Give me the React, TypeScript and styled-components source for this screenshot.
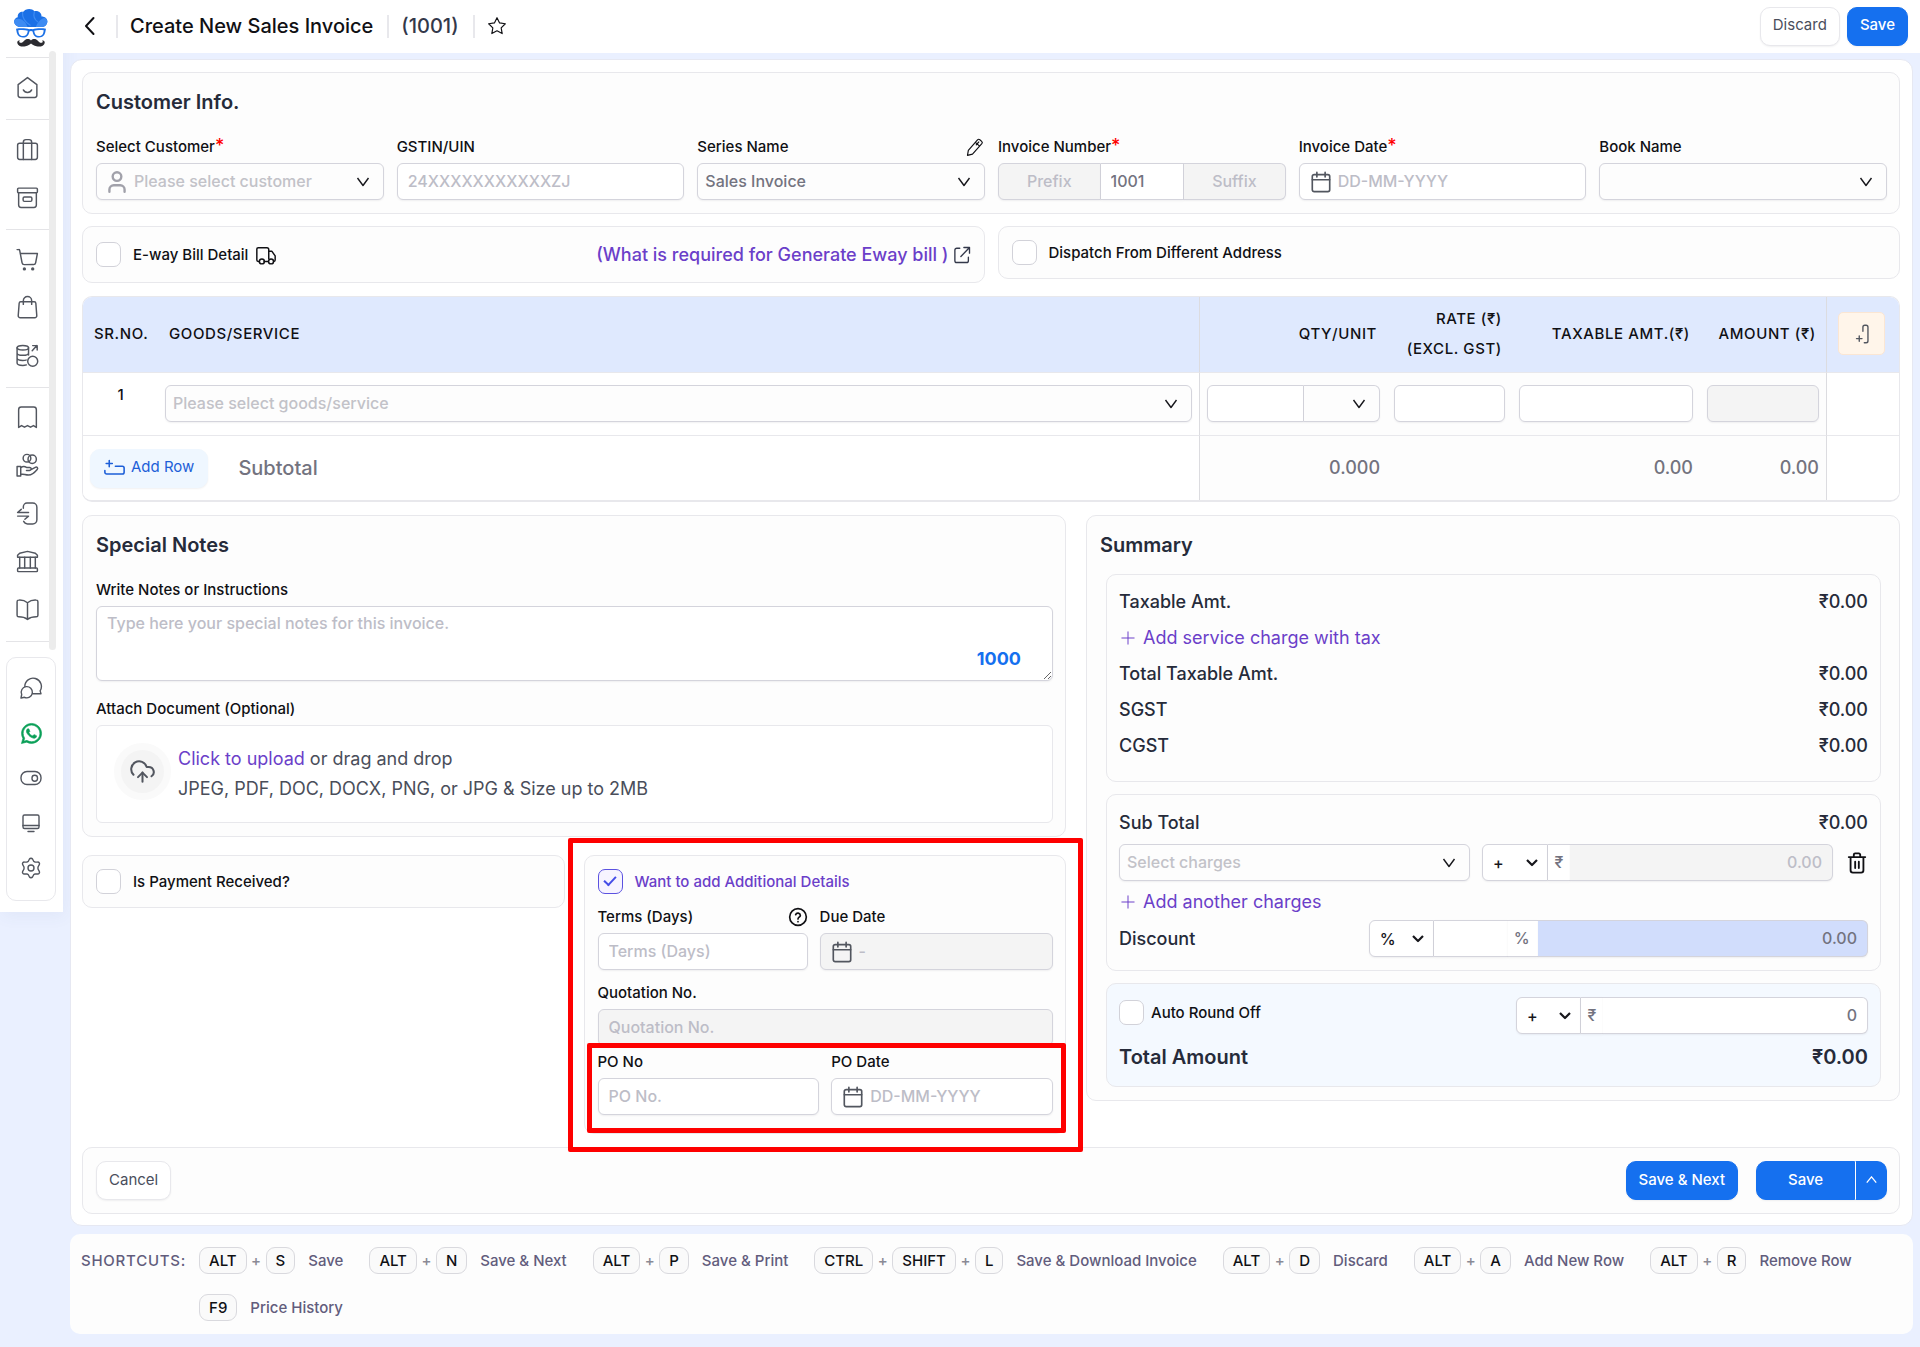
import React, { useId, useState } from 'react';
import styled, { createGlobalStyle, css } from 'styled-components';
import { FaWhatsapp } from 'react-icons/fa';
import { User, CloudUpload } from 'lucide-react';

const color = {
  page: '#eaf0ff',
  card: '#fdfdfd',
  line: '#e8e8ec',
  field: '#d4d4dc',
  muted: '#73737f',
  faint: '#bdbdc7',
  ink: '#262b3a',
  purple: '#6b3fc9',
  blue: '#1570ef',
};

const GlobalStyle = createGlobalStyle`
  *, *::before, *::after { box-sizing: border-box; }
  body {
    margin: 0;
    background: ${color.page};
    color: #101014;
    font-family: Inter, "Noto Sans", "Liberation Sans", sans-serif;
    font-size: 15px;
    font-weight: 500;
    line-height: 20px;
  }
  button, input, select, textarea { font: inherit; margin: 0; }
  button { cursor: pointer; }
`;

/* ---------- shell ---------- */

const Shell = styled.div`
  display: grid;
  grid-template-columns: 63px minmax(0, 1fr);
  align-items: start;
`;

const Sidebar = styled.aside`
  background: #fff;
  padding: 8px 7px 11px 6px;
  box-shadow: 2px 4px 16px rgba(60, 80, 140, 0.06);
`;

const LogoLink = styled.a`
  display: flex;
  justify-content: center;
  height: 43px;
`;

const NavScroll = styled.nav`
  display: grid;
  grid-template-columns: 1fr 7px;
`;

const NavGroups = styled.div`
  padding: 6px 0 8px;
`;

const ScrollThumb = styled.span`
  background: #ececec;
  border-radius: 4px;
`;

const NavGroup = styled.ul`
  list-style: none;
  margin: 0;
  padding: 5px 0 8px;
  border-top: 1px solid #e4e4e7;
  &:last-child { padding: 0; }
`;

const NavLink = styled.a<{ $green?: boolean }>`
  display: flex;
  align-items: center;
  justify-content: center;
  height: 48px;
  color: ${p => (p.$green ? '#0a9f57' : '#52565f')};
`;

const ToolList = styled.ul`
  list-style: none;
  display: grid;
  grid-auto-rows: 1fr;
  height: 244px;
  margin: 7px 0 0;
  padding: 8px 0 10px;
  border: 1px solid ${color.line};
  border-radius: 10px;
  li { display: grid; }
  ${NavLink} { height: auto; }
`;

const Page = styled.div`
  min-width: 0;
`;

const TopBar = styled.header`
  display: flex;
  align-items: center;
  justify-content: space-between;
  height: 53px;
  padding: 0 12px 1px 15px;
  background: #fff;
`;

const TopGroup = styled.div`
  display: flex;
  align-items: center;
`;

const TopActions = styled(TopGroup)`
  gap: 7px;
`;

const Crumb = styled.div`
  display: flex;
  align-items: center;
  height: 23px;
  padding: 0 14px 0 12px;
  border-left: 2px solid ${color.line};
`;

const PageTitle = styled.h1`
  margin: 0;
  font-size: 20px;
  line-height: 24px;
  font-weight: 500;
`;

const InvoiceNo = styled.span`
  font-size: 20px;
  line-height: 24px;
  color: #33384a;
`;

const IconButton = styled.button`
  display: inline-flex;
  align-items: center;
  justify-content: center;
  padding: 0;
  border: 0;
  background: none;
  color: inherit;
`;

const BackButton = styled(IconButton)`
  width: 24px;
  height: 24px;
  margin-right: 14px;
`;

const Button = styled.button<{ $primary?: boolean }>`
  height: 39px;
  padding: 0 12px 2px;
  border: 1px solid ${p => (p.$primary ? color.blue : color.line)};
  border-radius: 10px;
  background: ${p => (p.$primary ? color.blue : '#fff')};
  color: ${p => (p.$primary ? '#fff' : '#4a4e5c')};
  font-size: 15px;
  font-weight: ${p => (p.$primary ? 500 : 400)};
  box-shadow: 0 1px 2px rgba(16, 24, 40, 0.06);
`;

const SplitButton = styled.div`
  display: flex;
  ${Button}:first-child {
    width: 99px;
    border-radius: 10px 0 0 10px;
  }
  ${Button}:last-child {
    width: 32px;
    padding: 0;
    border-left-color: #fff;
    border-radius: 0 10px 10px 0;
  }
`;

const Content = styled.main`
  display: grid;
  gap: 8px;
  padding: 6px 7px 13px;
`;

const Panel = styled.form`
  display: grid;
  gap: 13px;
  padding: 12px 12px 11px 11px;
  background: #fff;
  border: 1px solid #e6e8f2;
  border-radius: 12px;
`;

const Card = styled.section`
  min-width: 0;
  padding: 13px 12px 13px 13px;
  background: ${color.card};
  border: 1px solid ${color.line};
  border-radius: 10px;
`;

const CardTitle = styled.h2`
  margin: 0 0 19px;
  font-size: 20px;
  line-height: 32px;
  font-weight: 600;
  color: ${color.ink};
`;

/* ---------- fields ---------- */

const FieldBox = styled.div`
  display: grid;
  gap: 6px;
  min-width: 0;
`;

const LabelRow = styled.div`
  display: flex;
  align-items: center;
  justify-content: space-between;
  height: 20px;
`;

const Required = styled.span`
  color: #f00;
  font-size: 18px;
  line-height: 16px;
`;

const frame = css`
  height: 37px;
  border: 1px solid ${color.field};
  border-radius: 6px;
  box-shadow: 0 1px 2px rgba(16, 24, 40, 0.06);
`;

const Input = styled.input<{ $right?: boolean }>`
  ${frame}
  width: 100%;
  min-width: 0;
  padding: 0 10px 2px;
  background: #fff;
  color: ${color.muted};
  font-size: 16px;
  outline: none;
  text-align: ${p => (p.$right ? 'right' : 'left')};
  &::placeholder { color: ${color.faint}; opacity: 1; }
  &:disabled { background: #f4f4f4; }
`;

const WithIcon = styled.div<{ $disabled?: boolean }>`
  ${frame}
  display: flex;
  align-items: center;
  gap: 6px;
  padding: 0 10px;
  background: ${p => (p.$disabled ? '#f4f4f4' : '#fff')};
  color: #52565f;
  svg { flex: none; }
  ${Input} { height: 35px; padding: 0 0 2px; border: 0; box-shadow: none; background: none; }
`;

const SelectBox = styled.div<{ $empty?: boolean; $icon?: boolean }>`
  ${frame}
  display: grid;
  align-items: center;
  min-width: 0;
  background: ${color.card};
  > * { grid-area: 1 / 1; }
  select {
    appearance: none;
    width: 100%;
    min-width: 0;
    height: 35px;
    padding: 0 30px 2px ${p => (p.$icon ? 37 : 7)}px;
    border: 0;
    border-radius: 6px;
    outline: none;
    background: none;
    font-size: 16px;
    color: ${p => (p.$empty ? '#c2c2c8' : color.muted)};
  }
  > svg { pointer-events: none; }
  > svg:last-child { justify-self: end; margin-right: 12px; }
  > svg:first-child { margin-left: 7px; color: #a1a1aa; }
`;

const CompactSelect = styled(SelectBox)`
  background: #fff;
  select { padding: 0 26px 0 10px; color: #17171c; }
  > svg:last-child { margin-right: 7px; }
`;

const Joined = styled.div<{ $columns: string }>`
  display: grid;
  grid-template-columns: ${p => p.$columns};
  > :not(:first-child) { border-top-left-radius: 0; border-bottom-left-radius: 0; border-left-width: 0; }
  > :not(:last-child) { border-top-right-radius: 0; border-bottom-right-radius: 0; }
`;

const NumberParts = styled(Joined)`
  ${Input}:disabled { text-align: center; }
`;

const Addon = styled.span<{ $end?: boolean }>`
  ${frame}
  display: flex;
  align-items: center;
  justify-content: ${p => (p.$end ? 'flex-end' : 'center')};
  padding: 0 ${p => (p.$end ? 8 : 0)}px 2px 0;
  background: #fff;
  && { border-right-width: 0; }
  color: ${color.muted};
  font-size: 16px;
`;

const BareInput = styled(Input)`
  border-right-width: 0;
`;

const DiscountAmount = styled(Input)`
  background: #d1ddfc;
`;

const CheckLabel = styled.label<{ $active?: boolean; $tight?: boolean }>`
  display: inline-flex;
  align-items: center;
  gap: ${p => (p.$tight ? 7 : 12)}px;
  color: ${p => (p.$active ? color.purple : 'inherit')};
`;

const Checkbox = styled.input`
  appearance: none;
  display: grid;
  place-items: center;
  width: 25px;
  height: 25px;
  border: 1px solid #d2d2d9;
  border-radius: 7px;
  background: #fff;
  &::after {
    content: '';
    width: 12px;
    height: 7px;
    border: solid transparent;
    border-width: 0 0 2px 2px;
    transform: translateY(-2px) rotate(-47deg);
  }
  &:checked { border-color: #5b52e0; background: #f7f4ff; }
  &:checked::after { border-color: #444ce7; }
`;

/* ---------- sections ---------- */

const SixColumns = styled.div`
  display: grid;
  grid-template-columns: repeat(6, minmax(0, 1fr));
  gap: 13px;
`;

const HalfRow = styled.div`
  display: grid;
  grid-template-columns: repeat(2, minmax(0, 1fr));
  align-items: start;
  gap: 13px;
  margin-top: -1px;
`;

const OptionCard = styled(Card)<{ $tall?: boolean }>`
  display: flex;
  align-items: center;
  justify-content: space-between;
  height: ${p => (p.$tall ? 57 : 53)}px;
  padding: 0 13px;
`;

const InlineLabel = styled.span`
  display: inline-flex;
  align-items: center;
  gap: 7px;
`;

const HelpLink = styled.a`
  display: inline-flex;
  align-items: center;
  gap: 4px;
  color: ${color.purple};
  font-size: 18px;
  line-height: 24px;
  text-decoration: none;
  svg { color: #33384a; }
`;

const TableFrame = styled.div`
  border: 1px solid ${color.line};
  border-bottom-width: 2px;
  border-radius: 10px;
  overflow: hidden;
`;

const Table = styled.table`
  width: 100%;
  table-layout: fixed;
  border-collapse: separate;
  border-spacing: 0;
`;

const HeadCell = styled.th<{ $right?: boolean; $divider?: boolean }>`
  height: 76px;
  padding: 0 10px 2px 11px;
  background: #dfe9fe;
  border-bottom: 1px solid ${color.line};
  border-left: ${p => (p.$divider ? `1px solid #dcdce0` : '0')};
  font-weight: 500;
  line-height: 30px;
  letter-spacing: 0.04em;
  text-align: ${p => (p.$right ? 'right' : 'left')};
  white-space: nowrap;
`;

const Cell = styled.td<{ $tint?: boolean; $divider?: boolean }>`
  height: 63px;
  padding: 12px 7px;
  vertical-align: top;
  background: ${p => (p.$tint ? color.card : '#fff')};
  border-bottom: 1px solid ${color.line};
  border-left: ${p => (p.$divider ? `1px solid #dcdce0` : '0')};
`;

const IndexCell = styled(Cell)`
  text-align: center;
`;

const TotalCell = styled(Cell)`
  height: 64px;
  border-bottom: 0;
  vertical-align: middle;
  text-align: right;
  font-size: 18px;
  color: ${color.muted};
`;

const SubtotalBar = styled.div`
  display: flex;
  align-items: center;
  gap: 30px;
  font-size: 20px;
`;

const AddRowButton = styled(Button)`
  display: inline-flex;
  align-items: center;
  gap: 6px;
  padding: 0 13px 2px;
  border-color: #eff7ff;
  background: #eff7ff;
  color: #1d5fd8;
`;

const AddColumnButton = styled(IconButton)`
  width: 47px;
  height: 43px;
  background: #fff5ea;
  border: 1px solid #fbe6d3;
  border-radius: 5px;
  color: #52565f;
  vertical-align: middle;
`;

const Lower = styled.div`
  display: grid;
  grid-template-columns: minmax(0, 984fr) minmax(0, 814fr);
  align-items: start;
  gap: 20px;
`;

const LeftStack = styled.div`
  display: grid;
  gap: 18px;
`;

const NotesArea = styled.div`
  display: grid;
  > * { grid-area: 1 / 1; }
`;

const Textarea = styled.textarea`
  ${frame}
  display: block;
  width: 100%;
  height: 75px;
  padding: 6px 10px;
  background: #fff;
  color: ${color.muted};
  font-size: 16px;
  outline: none;
  resize: vertical;
  &::placeholder { color: ${color.faint}; opacity: 1; }
`;

const CharCount = styled.output`
  place-self: end;
  margin: 0 32px 12px 0;
  color: ${color.blue};
  font-size: 18px;
  font-weight: 700;
  pointer-events: none;
`;

const NotesFields = styled.div`
  display: grid;
  gap: 18px;
`;

const UploadBox = styled.div`
  display: flex;
  align-items: center;
  gap: 7px;
  height: 98px;
  padding: 0 17px 6px;
  background: #fff;
  border: 1px solid ${color.line};
  border-radius: 6px;
`;

const UploadBadge = styled.span`
  display: flex;
  align-items: center;
  justify-content: center;
  width: 57px;
  height: 57px;
  border: 7px solid #fafafa;
  border-radius: 50%;
  background: #f4f4f4;
  color: #52565f;
`;

const UploadText = styled.div`
  padding-top: 6px;
  font-size: 18px;
  font-weight: 400;
  line-height: 30px;
  color: #4a4e5a;
`;

const FileLabel = styled.label`
  color: ${color.purple};
  cursor: pointer;
  input { display: none; }
`;

const SplitCards = styled.div`
  display: grid;
  grid-template-columns: repeat(2, minmax(0, 1fr));
  align-items: start;
  gap: 19px;
`;

const Highlighted = styled.div`
  position: relative;
`;

const AdditionalCard = styled(Card)`
  display: grid;
  padding-bottom: 18px;
`;

const FieldPair = styled.div<{ $columns: string; $top: number }>`
  display: grid;
  grid-template-columns: ${p => p.$columns};
  gap: 12px;
  margin-top: ${p => p.$top}px;
`;

const RedMark = styled.span<{ $inset: string }>`
  position: absolute;
  inset: ${p => p.$inset};
  border: 5px solid #fe0000;
  border-radius: 2px;
  pointer-events: none;
  z-index: 2;
`;

const SummaryTitle = styled(CardTitle)`
  margin-bottom: 13px;
`;

const SummaryStack = styled.div`
  display: grid;
  gap: 12px;
  padding: 0 6px;
`;

const SummaryBox = styled.div<{ $padding: string; $blue?: boolean }>`
  padding: ${p => p.$padding};
  background: ${p => (p.$blue ? '#f4f9ff' : color.card)};
  border: 1px solid ${color.line};
  border-radius: 10px;
`;

const SummaryRow = styled.div<{ $total?: boolean }>`
  display: flex;
  align-items: center;
  justify-content: space-between;
  min-height: 36px;
  margin-top: ${p => (p.$total ? 5 : 0)}px;
  font-size: ${p => (p.$total ? 20 : 18)}px;
  font-weight: ${p => (p.$total ? 600 : 500)};
  color: ${color.ink};
`;

const AddLink = styled.button`
  display: flex;
  align-items: center;
  gap: 8px;
  height: 36px;
  padding: 0 2px;
  border: 0;
  background: none;
  color: ${color.purple};
  font-size: 18px;
  font-weight: 400;
`;

const ChargeRow = styled.div`
  display: grid;
  grid-template-columns: minmax(0, 1fr) minmax(0, 1fr) 23px;
  align-items: center;
  gap: 12px;
  margin: 3px 0;
`;

const DiscountGroup = styled(Joined)`
  width: calc(100% * 2 / 3);
`;

const RoundRow = styled.div`
  display: flex;
  align-items: flex-start;
  justify-content: space-between;
  ${CheckLabel} { height: 31px; }
  ${Joined} { width: 47%; }
`;

const ActionBar = styled(Card)`
  display: flex;
  justify-content: space-between;
`;

const ActionGroup = styled.div`
  display: flex;
  gap: 18px;
`;

const ShortcutBar = styled.footer`
  display: flex;
  gap: 13px;
  padding: 13px 11px;
  background: ${color.card};
  border-radius: 10px;
  color: #625c7c;
`;

const ShortcutTitle = styled.span`
  line-height: 27px;
  letter-spacing: 0.05em;
`;

const ShortcutList = styled.ul`
  display: flex;
  flex-wrap: wrap;
  gap: 20px 26px;
  margin: 0;
  padding: 0;
  list-style: none;
`;

const Shortcut = styled.li`
  display: flex;
  align-items: center;
  height: 27px;
`;

const Key = styled.kbd`
  height: 27px;
  padding: 0 9px;
  border: 1px solid #d9d9de;
  border-radius: 9px;
  background: #fafafa;
  color: #101014;
  font: inherit;
  line-height: 26px;
`;

const Plus = styled.span`
  width: 19px;
  text-align: center;
  color: #8a8a95;
`;

const ShortcutName = styled.span`
  margin-left: 13px;
  line-height: 24px;
`;

/* ---------- icons ---------- */

const Svg = ({ size = 24, w = 1.4, children }: { size?: number; w?: number; children: React.ReactNode }) => (
  <svg width={size} height={size} viewBox="0 0 24 24" fill="none" stroke="currentColor" strokeWidth={w}
    strokeLinecap="round" strokeLinejoin="round" aria-hidden="true">{children}</svg>
);

const navIcons: Record<string, React.ReactNode> = {
  Home: <><path d="M3 9.200 12 2.500l9 6.700v10.300a2 2 0 0 1-2 2H5a2 2 0 0 1-2-2z" /><path d="M8 14.300c.8 1.600 2.200 2.400 4 2.400s3.200-.8 4-2.400" /></>,
  Business: <><rect x="2.500" y="6" width="19" height="15.500" rx="2" /><path d="M8 21.500V5a2.500 2.500 0 0 1 2.500-2.500h3A2.500 2.500 0 0 1 16 5v16.500" /></>,
  Products: <><rect x="2.500" y="3" width="19" height="4.500" rx="1" /><path d="M3.500 7.500v11.700a2.300 2.300 0 0 0 2.300 2.300h12.400a2.300 2.300 0 0 0 2.300-2.300V7.500" /><rect x="7.800" y="11.500" width="8.400" height="4.200" rx="1.200" /></>,
  Sales: <><path d="M2 2.500h1.500a1 1 0 0 1 1 .8L6.800 15.300a2 2 0 0 0 2 1.600h9a2 2 0 0 0 2-1.600l1.700-9H5" /><circle cx="9" cy="21" r=".9" fill="currentColor" /><circle cx="17" cy="21" r=".9" fill="currentColor" /></>,
  Purchase: <><path d="M5.500 6.500h13A1.500 1.500 0 0 1 20 7.900l.9 11.800a2 2 0 0 1-2 2.200H5.100a2 2 0 0 1-2-2.200L4 7.900a1.500 1.500 0 0 1 1.500-1.400z" /><path d="M8 9V5.500a4 4 0 0 1 8 0V9" /></>,
  Stock: <><ellipse cx="7.500" cy="4.500" rx="5.500" ry="2.200" /><path d="M2 4.500v14.700c0 1.300 2.500 2.300 5.500 2.300 1.300 0 2.500-.2 3.500-.5M13 4.500v7M2 9.500c0 1.300 2.500 2.300 5.500 2.300s5.500-1 5.500-2.300M2 14.500c0 1.300 2.500 2.300 5.500 2.300 1.200 0 2.200-.1 3.200-.4" /><circle cx="17" cy="17.500" r="4.800" /><path d="m16.500 7.500 4.500-5M17 2.500h4.300v4.300" /></>,
  Receipt: <path d="M3.500 21.500v-17a2.500 2.500 0 0 1 2.500-2.500h12a2.500 2.500 0 0 1 2.500 2.500v17l-2.800-1.800-2.800 1.600-2.900-1.600-2.900 1.600-2.800-1.600z" />,
  Payments: <><circle cx="11.500" cy="5" r="3.700" /><circle cx="16.500" cy="6" r="4" /><path d="M2 13h3.500v9H2zM5.500 14.200c2-1.500 4-1.300 5.500-.3h3c2.300 0 2 2.800 0 2.800h-3M14.500 16.500l5-2.800c1.500-.8 3 .8 1.800 2.200-2.300 2.800-5 5.300-8.300 5.300-2.800 0-4.500-1-7.500-1" /></>,
  Expenses: <><path d="M8 7V5.500A3.500 3.500 0 0 1 11.500 2h5.500a4 4 0 0 1 4 4v12a4 4 0 0 1-4 4h-5a4 4 0 0 1-3.700-2.500" /><path d="M2.500 11h10.500M2.500 11 6 8M2.500 14.500h10.500l-3.500 3" /></>,
  Bank: <><path d="M2.500 8V6l2-2L12 2.300 19.500 4l2 2v2z" /><rect x="2.500" y="18.300" width="19" height="3.400" rx=".8" /><path d="M4.500 8v10.300M9.300 8v10.300M14.700 8v10.300M19.500 8v10.300" /></>,
  Ledger: <><path d="M12 5.500C9.500 3.500 6 2.800 3.500 3A1.500 1.500 0 0 0 2 4.500v13A1.500 1.500 0 0 0 3.500 19c3 0 6 .5 8.500 2.500 2.500-2 5.500-2.500 8.500-2.500a1.500 1.500 0 0 0 1.500-1.500v-13A1.500 1.500 0 0 0 20.500 3c-2.500-.2-6 .5-8.500 2.500zM12 5.500v16" /></>,
  Chat: <><path d="M13.500 17.800H22l-.9-2.900A8.300 8.300 0 1 0 5.800 10.500" /><path d="M2 22l.7-3.500a5.600 5.600 0 1 1 2.800 2.800z" /></>,
  Toggle: <><rect x="2" y="5.500" width="20" height="13" rx="6" /><rect x="13" y="9.200" width="5.500" height="6" rx="2.700" /></>,
  Monitor: <><rect x="4" y="4" width="16" height="13.500" rx="1.500" /><path d="M4 14.500h16M9 20.500h6" /></>,
  Settings: <><circle cx="12" cy="12" r="3" /><path d="M9.300 5.300 10.500 3a1.800 1.800 0 0 1 3 0l1.200 2.300 1.500.8 2.400-.1a1.800 1.800 0 0 1 1.700 2.700L19 11v2l1.300 2.300a1.800 1.800 0 0 1-1.700 2.700l-2.400-.1-1.500.8-1.200 2.300a1.800 1.800 0 0 1-3 0l-1.200-2.300-1.500-.8-2.400.1a1.800 1.800 0 0 1-1.700-2.700L5 13v-2L3.700 8.700A1.800 1.800 0 0 1 5.400 6l2.400.1z" /></>,
};

const Logo = () => (
  <svg width="34" height="43" viewBox="0 0 34 43" aria-hidden="true">
    <path d="M5 19C1 17.500-.8 14.500.6 11.800c.7-1.500 2-2.300 3.200-2.500C3.200 6 6 3.300 9.300 3.800 11 .8 17.500-.3 20.500 3.200c3.700-1 7.200 1.500 7 5.200 4 0 6.300 2.800 5.800 5.800-.4 2.600-2.300 4.300-4.800 4.800z" fill="#1b70e6" />
    <path d="M5 19C1 17.500-.8 14.500.6 11.800 5 9 11.500 12 13.500 19zM22 19c1-4.500 4.500-8 9-9.300 1.800 1 2.600 2.800 2.300 4.500-.4 2.600-2.300 4.300-4.800 4.800z" fill="#3d8bf2" />
    <path d="M8.500 4c-.5 6 3 10.500 8 13.500M20.500 3.200C19 8 21 12 24 14" fill="none" stroke="#3d8bf2" strokeWidth="1.200" />
    <path d="M2 20.800c4-.7 9.500-.7 13.300.5 1.100-.3 2.300-.3 3.400 0 3.800-1.200 9.300-1.200 13.300-.5l-.4 2c-.8 4.700-2.700 6.700-6.600 6.700-3.700 0-5.700-2-6.400-6-.4-.8-2.800-.8-3.200 0-.7 4-2.700 6-6.400 6-3.900 0-5.800-2-6.600-6.700z" fill="#1b70e6" />
    <path d="M4.300 22.300c3-.5 6.800-.4 9.500.4-.4 3.600-1.700 5.400-4.800 5.400-3 0-4.300-1.600-4.700-5.800zM29.700 22.300c-3-.5-6.800-.4-9.500.4.4 3.600 1.700 5.400 4.800 5.400 3 0 4.300-1.600 4.700-5.800z" fill="#fff" />
    <path d="M17 32.500c1.800-2 5-2 6.800.2 1.400 1.800 3.200 2.600 4.500 1.700.8-.6.500-1.500-.3-1.700 1.600-.7 3 .4 2.700 2.200-.5 3-4.700 4.300-8.200 3.300-2.500-.7-4.500-1.700-5.500-2.800-1 1.100-3 2.100-5.500 2.800-3.500 1-7.700-.3-8.200-3.300-.3-1.800 1.100-2.900 2.700-2.200-.8.200-1.100 1.100-.3 1.700 1.300.9 3.100.1 4.500-1.700 1.800-2.200 5-2.200 6.800-.2z" fill="#2b2b30" />
  </svg>
);

const Chevron = ({ bold }: { bold?: boolean }) => (
  <svg width="16" height="16" viewBox="0 0 16 16" fill="none" stroke="#17171c" strokeWidth={bold ? 2.2 : 1.4} aria-hidden="true">
    <path d={bold ? 'M3 5l5 5 5-5' : 'M2.500 4 8 11.500 13.500 4'} strokeLinejoin="round" />
  </svg>
);

const Calendar = () => (
  <Svg size={22} w={1.8}><path d="M7.500 1.500v5M16.500 1.500v5M2.500 9.500h19" /><rect x="2.500" y="4" width="19" height="18.500" rx="2" /></Svg>
);

const PlusIcon = () => (
  <Svg size={14} w={1.7}><path d="M12 1.500v21M1.500 12h21" /></Svg>
);

/* ---------- parts ---------- */

type FieldProps = { label: string; required?: boolean; extra?: React.ReactNode; children: (id: string) => React.ReactNode };

const Field = ({ label, required, extra, children }: FieldProps) => {
  const id = useId();
  return (
    <FieldBox>
      <LabelRow>
        <label htmlFor={id}>{label}{required && <Required>*</Required>}</label>
        {extra}
      </LabelRow>
      {children(id)}
    </FieldBox>
  );
};

type SelectProps = { id?: string; label?: string; text?: string; empty?: boolean; icon?: React.ReactNode };

const Select = ({ id, label, text = '', empty, icon }: SelectProps) => (
  <SelectBox $empty={empty} $icon={!!icon}>
    {icon}
    <select id={id} aria-label={label}><option>{text}</option></select>
    <Chevron />
  </SelectBox>
);

const SignSelect = ({ label, options }: { label: string; options: string[] }) => (
  <CompactSelect>
    <select aria-label={label}>{options.map(o => <option key={o}>{o}</option>)}</select>
    <Chevron bold />
  </CompactSelect>
);

const DateField = ({ id, text, disabled }: { id: string; text: string; disabled?: boolean }) => (
  <WithIcon $disabled={disabled}>
    <Calendar />
    <Input id={id} placeholder={text} disabled={disabled} />
  </WithIcon>
);

const navGroups = [['Home'], ['Business', 'Products'], ['Sales', 'Purchase', 'Stock'], ['Receipt', 'Payments', 'Expenses', 'Bank', 'Ledger']];
const tools = ['Chat', 'WhatsApp', 'Toggle', 'Monitor', 'Settings'];

const shortcuts: [string[], string][] = [
  [['ALT', 'S'], 'Save'],
  [['ALT', 'N'], 'Save & Next'],
  [['ALT', 'P'], 'Save & Print'],
  [['CTRL', 'SHIFT', 'L'], 'Save & Download Invoice'],
  [['ALT', 'D'], 'Discard'],
  [['ALT', 'A'], 'Add New Row'],
  [['ALT', 'R'], 'Remove Row'],
  [['F9'], 'Price History'],
];

const SideNav = () => (
  <Sidebar>
    <LogoLink href="#" aria-label="Dashboard"><Logo /></LogoLink>
    <NavScroll>
      <NavGroups>
        {navGroups.map((group, i) => (
          <NavGroup key={i}>
            {group.map(name => (
              <li key={name}><NavLink href="#" aria-label={name}><Svg size={25}>{navIcons[name]}</Svg></NavLink></li>
            ))}
          </NavGroup>
        ))}
        <NavGroup />
      </NavGroups>
      <ScrollThumb />
    </NavScroll>
    <ToolList>
      {tools.map(name => (
        <li key={name}>
          <NavLink href="#" aria-label={name} $green={name === 'WhatsApp'}>
            {name === 'WhatsApp'
              ? <FaWhatsapp size={23} stroke="currentColor" strokeWidth={14} />
              : <Svg size={24}>{navIcons[name]}</Svg>}
          </NavLink>
        </li>
      ))}
    </ToolList>
  </Sidebar>
);

const CustomerInfo = () => (
  <Card>
    <CardTitle>Customer Info.</CardTitle>
    <SixColumns>
      <Field label="Select Customer" required>
        {id => <Select id={id} text="Please select customer" empty icon={<User size={26} strokeWidth={2.2} />} />}
      </Field>
      <Field label="GSTIN/UIN">{id => <Input id={id} placeholder="24XXXXXXXXXXXZJ" />}</Field>
      <Field
        label="Series Name"
        extra={
          <IconButton type="button" aria-label="Edit series">
            <Svg size={20}><path d="M3 22l1-6L15 3.500a2 2 0 0 1 2.800-.2L20 5.200a2 2 0 0 1 .2 2.800L9 20.500zM12.500 6.500l5 4.500M16.500 6l-3 3.500" /></Svg>
          </IconButton>
        }
      >
        {id => <Select id={id} text="Sales Invoice" />}
      </Field>
      <Field label="Invoice Number" required>
        {id => (
          <NumberParts $columns="minmax(0, 103fr) minmax(0, 84fr) minmax(0, 102fr)">
            <Input placeholder="Prefix" disabled aria-label="Prefix" />
            <Input id={id} defaultValue="1001" />
            <Input placeholder="Suffix" disabled aria-label="Suffix" />
          </NumberParts>
        )}
      </Field>
      <Field label="Invoice Date" required>{id => <DateField id={id} text="DD-MM-YYYY" />}</Field>
      <Field label="Book Name">{id => <Select id={id} />}</Field>
    </SixColumns>
  </Card>
);

const ItemsTable = () => (
  <TableFrame>
    <Table>
      <colgroup>
        <col style={{ width: 75 }} /><col /><col style={{ width: 188 }} /><col style={{ width: 125 }} />
        <col style={{ width: 188 }} /><col style={{ width: 126 }} /><col style={{ width: 73 }} />
      </colgroup>
      <thead>
        <tr>
          <HeadCell>SR.NO.</HeadCell>
          <HeadCell>GOODS/SERVICE</HeadCell>
          <HeadCell $right $divider>QTY/UNIT</HeadCell>
          <HeadCell $right>RATE (₹)<br />(EXCL. GST)</HeadCell>
          <HeadCell $right>TAXABLE AMT.(₹)</HeadCell>
          <HeadCell $right>AMOUNT (₹)</HeadCell>
          <HeadCell $divider>
            <AddColumnButton type="button" aria-label="Add column">
              <Svg size={22} w={1.5}><path d="M13 9V4.500a2 2 0 0 1 2-2h1.500a2 2 0 0 1 2 2v15a2 2 0 0 1-2 2h-2M9 14v6M6 17h6" /></Svg>
            </AddColumnButton>
          </HeadCell>
        </tr>
      </thead>
      <tbody>
        <tr>
          <IndexCell>1</IndexCell>
          <Cell><Select label="Goods or service" text="Please select goods/service" empty /></Cell>
          <Cell $tint $divider>
            <Joined $columns="minmax(0, 97fr) minmax(0, 76fr)">
              <Input aria-label="Quantity" />
              <Select label="Unit" />
            </Joined>
          </Cell>
          <Cell $tint><Input aria-label="Rate" /></Cell>
          <Cell $tint><Input aria-label="Taxable amount" /></Cell>
          <Cell $tint><Input aria-label="Amount" disabled /></Cell>
          <Cell $divider />
        </tr>
      </tbody>
      <tfoot>
        <tr>
          <TotalCell colSpan={2}>
            <SubtotalBar>
              <AddRowButton type="button">
                <Svg size={21} w={1.8}><path d="M6 4v7M2.500 7.500h7M13 10.500h8a2 2 0 0 1 2 2v5a2 2 0 0 1-2 2H3a2 2 0 0 1-2-2v-2" /></Svg>
                Add Row
              </AddRowButton>
              Subtotal
            </SubtotalBar>
          </TotalCell>
          <TotalCell $tint $divider>0.000</TotalCell>
          <TotalCell $tint />
          <TotalCell $tint>0.00</TotalCell>
          <TotalCell $tint>0.00</TotalCell>
          <TotalCell $divider />
        </tr>
      </tfoot>
    </Table>
  </TableFrame>
);

const Notes = () => (
  <Card>
    <CardTitle>Special Notes</CardTitle>
    <NotesFields>
      <Field label="Write Notes or Instructions">
        {id => (
          <NotesArea>
            <Textarea id={id} placeholder="Type here your special notes for this invoice." />
            <CharCount>1000</CharCount>
          </NotesArea>
        )}
      </Field>
      <Field label="Attach Document (Optional)">
        {id => (
          <UploadBox>
            <UploadBadge><CloudUpload size={27} strokeWidth={1.8} /></UploadBadge>
            <UploadText>
              <FileLabel>Click to upload<input id={id} type="file" /></FileLabel> or drag and drop
              <br />
              JPEG, PDF, DOC, DOCX, PNG, or JPG &amp; Size up to 2MB
            </UploadText>
          </UploadBox>
        )}
      </Field>
    </NotesFields>
  </Card>
);

const AdditionalDetails = () => {
  const [open, setOpen] = useState(true);
  return (
    <Highlighted>
      <AdditionalCard>
        <CheckLabel $active={open}>
          <Checkbox type="checkbox" checked={open} onChange={e => setOpen(e.target.checked)} />
          Want to add Additional Details
        </CheckLabel>
        <FieldPair $columns="minmax(0, 9fr) minmax(0, 10fr)" $top={13}>
          <Field
            label="Terms (Days)"
            extra={<Svg size={20} w={2}><circle cx="12" cy="12" r="10" /><path d="M9.200 9.200a2.900 2.900 0 0 1 5.600.9c0 1.900-2.800 2.400-2.800 4.200M12 17.500v.1" /></Svg>}
          >
            {id => <Input id={id} placeholder="Terms (Days)" />}
          </Field>
          <Field label="Due Date">{id => <DateField id={id} text="-" disabled />}</Field>
        </FieldPair>
        <FieldPair $columns="minmax(0, 1fr)" $top={13}>
          <Field label="Quotation No.">{id => <Input id={id} placeholder="Quotation No." disabled />}</Field>
        </FieldPair>
        <FieldPair $columns="repeat(2, minmax(0, 1fr))" $top={6}>
          <Field label="PO No">{id => <Input id={id} placeholder="PO No." />}</Field>
          <Field label="PO Date">{id => <DateField id={id} text="DD-MM-YYYY" />}</Field>
        </FieldPair>
      </AdditionalCard>
      <RedMark $inset="-17px -17px -18px -16px" aria-hidden="true" />
      <RedMark $inset="188px 0 1px 3px" aria-hidden="true" />
    </Highlighted>
  );
};

const Summary = () => (
  <Card>
    <SummaryTitle>Summary</SummaryTitle>
    <SummaryStack>
      <SummaryBox $padding="9px 12px 17px">
        <SummaryRow><span>Taxable Amt.</span><span>₹0.00</span></SummaryRow>
        <AddLink type="button"><PlusIcon />Add service charge with tax</AddLink>
        <SummaryRow><span>Total Taxable Amt.</span><span>₹0.00</span></SummaryRow>
        <SummaryRow><span>SGST</span><span>₹0.00</span></SummaryRow>
        <SummaryRow><span>CGST</span><span>₹0.00</span></SummaryRow>
      </SummaryBox>
      <SummaryBox $padding="10px 12px 13px">
        <SummaryRow><span>Sub Total</span><span>₹0.00</span></SummaryRow>
        <ChargeRow>
          <Select label="Charges" text="Select charges" empty />
          <Joined $columns="66px 22px minmax(0, 1fr)">
            <SignSelect label="Charge sign" options={['+', '-']} />
            <Addon>₹</Addon>
            <Input $right disabled placeholder="0.00" aria-label="Charge amount" />
          </Joined>
          <IconButton type="button" aria-label="Remove charge">
            <Svg size={22} w={2}><path d="M3 5.500h18M8.500 5.500V3a1.500 1.500 0 0 1 1.500-1.500h4A1.500 1.500 0 0 1 15.500 3v2.500M5 5.500V20a2.500 2.500 0 0 0 2.500 2.500h9A2.500 2.500 0 0 0 19 20V5.500M10 10.500v7M14 10.500v7" /></Svg>
          </IconButton>
        </ChargeRow>
        <AddLink type="button"><PlusIcon />Add another charges</AddLink>
        <SummaryRow>
          <span>Discount</span>
          <DiscountGroup $columns="65px 74px 30px minmax(0, 1fr)">
            <SignSelect label="Discount type" options={['%', '₹']} />
            <BareInput aria-label="Discount percent" />
            <Addon $end>%</Addon>
            <DiscountAmount $right defaultValue="0.00" aria-label="Discount amount" />
          </DiscountGroup>
        </SummaryRow>
      </SummaryBox>
      <SummaryBox $blue $padding="13px 12px 11px">
        <RoundRow>
          <CheckLabel $tight><Checkbox type="checkbox" />Auto Round Off</CheckLabel>
          <Joined $columns="65px 22px minmax(0, 1fr)">
            <SignSelect label="Round off sign" options={['+', '-']} />
            <Addon>₹</Addon>
            <Input $right defaultValue="0" aria-label="Round off amount" />
          </Joined>
        </RoundRow>
        <SummaryRow $total><span>Total Amount</span><span>₹0.00</span></SummaryRow>
      </SummaryBox>
    </SummaryStack>
  </Card>
);

export default function App() {
  return (
    <>
      <GlobalStyle />
      <Shell>
        <SideNav />
        <Page>
          <TopBar>
            <TopGroup>
              <BackButton type="button" aria-label="Back"><Svg size={24} w={2}><path d="M15.500 4 8 12l7.500 8" /></Svg></BackButton>
              <Crumb><PageTitle>Create New Sales Invoice</PageTitle></Crumb>
              <Crumb><InvoiceNo>(1001)</InvoiceNo></Crumb>
              <Crumb>
                <IconButton type="button" aria-label="Favourite">
                  <Svg size={20}><path d="M12 2l3.100 6.300 6.900 1-5 4.900 1.200 6.900L12 17.800l-6.200 3.300L7 14.200 2 9.300l6.900-1z" /></Svg>
                </IconButton>
              </Crumb>
            </TopGroup>
            <TopActions>
              <Button type="button">Discard</Button>
              <Button type="button" $primary>Save</Button>
            </TopActions>
          </TopBar>
          <Content>
            <Panel onSubmit={e => e.preventDefault()}>
              <CustomerInfo />
              <HalfRow>
                <OptionCard $tall>
                  <CheckLabel>
                    <Checkbox type="checkbox" />
                    <InlineLabel>
                      E-way Bill Detail
                      <Svg size={22} w={1.6}><path d="M4.500 19H3.500A1.500 1.500 0 0 1 2 17.500v-12A1.500 1.500 0 0 1 3.500 4H13a2 2 0 0 1 2 2v10M15 8h3.500L22 13v4.500a1.500 1.500 0 0 1-1.500 1.500M10 19h4" /><circle cx="7.500" cy="19" r="2.700" /><circle cx="17.500" cy="19" r="2.700" /></Svg>
                    </InlineLabel>
                  </CheckLabel>
                  <HelpLink href="#">
                    (What is required for Generate Eway bill )
                    <Svg size={18} w={1.8}><path d="M9 3H5a2.500 2.500 0 0 0-2.500 2.500v14A2.500 2.500 0 0 0 5 22h13a2.500 2.500 0 0 0 2.500-2.500V15M14.500 2H22v7.500M22 2 10.500 14" /></Svg>
                  </HelpLink>
                </OptionCard>
                <OptionCard>
                  <CheckLabel><Checkbox type="checkbox" />Dispatch From Different Address</CheckLabel>
                </OptionCard>
              </HalfRow>
              <ItemsTable />
              <Lower>
                <LeftStack>
                  <Notes />
                  <SplitCards>
                    <OptionCard>
                      <CheckLabel><Checkbox type="checkbox" />Is Payment Received?</CheckLabel>
                    </OptionCard>
                    <AdditionalDetails />
                  </SplitCards>
                </LeftStack>
                <Summary />
              </Lower>
              <ActionBar>
                <Button type="button">Cancel</Button>
                <ActionGroup>
                  <Button type="button" $primary>Save &amp; Next</Button>
                  <SplitButton>
                    <Button type="submit" $primary>Save</Button>
                    <Button type="button" $primary aria-label="More save options"><Svg size={13} w={2.4}><path d="M4 17l8-10 8 10" /></Svg></Button>
                  </SplitButton>
                </ActionGroup>
              </ActionBar>
            </Panel>
            <ShortcutBar>
              <ShortcutTitle>SHORTCUTS:</ShortcutTitle>
              <ShortcutList>
                {shortcuts.map(([keys, name]) => (
                  <Shortcut key={name}>
                    {keys.map((k, i) => (
                      <React.Fragment key={k}>{i > 0 && <Plus>+</Plus>}<Key>{k}</Key></React.Fragment>
                    ))}
                    <ShortcutName>{name}</ShortcutName>
                  </Shortcut>
                ))}
              </ShortcutList>
            </ShortcutBar>
          </Content>
        </Page>
      </Shell>
    </>
  );
}
